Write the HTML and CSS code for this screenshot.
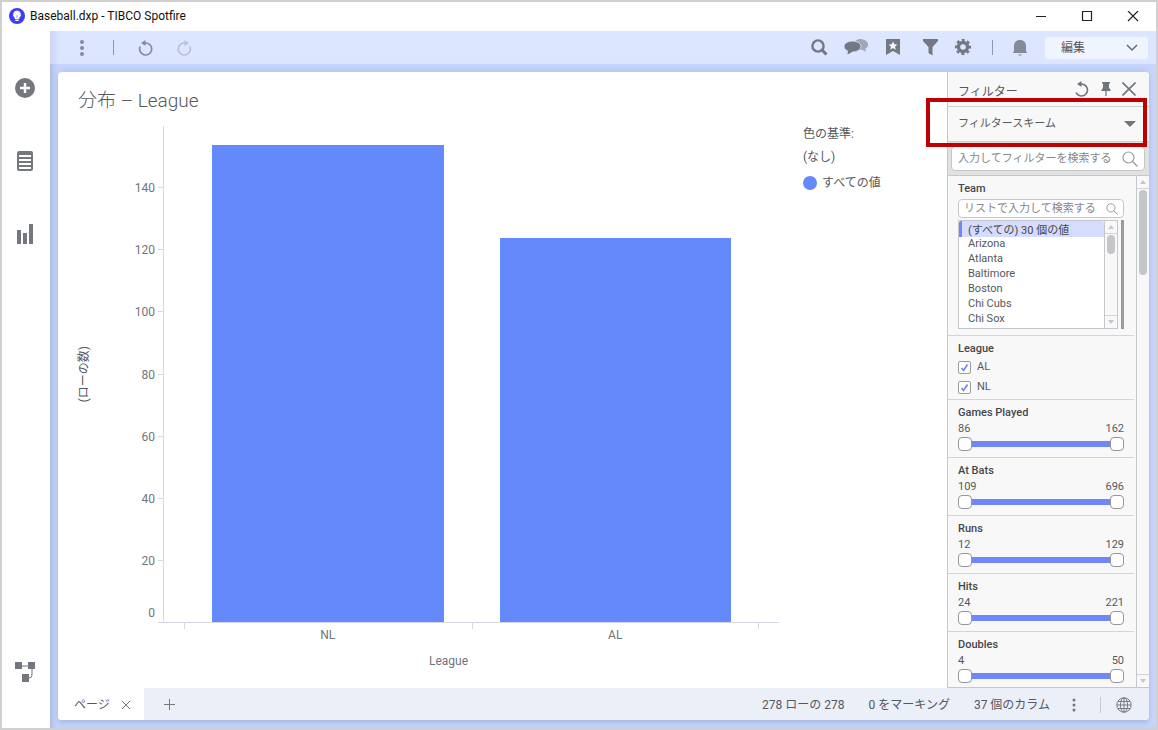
FILE: index.html
```html
<!DOCTYPE html>
<html lang="ja">
<head>
  <meta charset="UTF-8">
  <title>Baseball.dxp - TIBCO Spotfire</title>
  <link rel="stylesheet" href="styles.css">
</head>
<body>
  <header class="titlebar">
    <svg class="logo" width="16" height="16" viewBox="0 0 16 16">
      <circle cx="8" cy="8" r="8" fill="#3d3df5"/>
      <path d="M8 2.500a4 4 0 0 0-2.300 7.200V11h4.600V9.700A4 4 0 0 0 8 2.500z" fill="#fff"/>
      <path d="M6.300 12.300h3.400" stroke="#fff" stroke-width="1.400"/>
      <path d="M8 7v3" stroke="#9a9af9"/>
    </svg>
    <span class="window-title">Baseball.dxp - TIBCO Spotfire</span>
    <button class="win-btn" aria-label="Minimize"><svg width="12" height="12" viewBox="0 0 12 12"><path d="M1 5.500h10" stroke="#222"/></svg></button>
    <button class="win-btn" aria-label="Maximize"><svg width="12" height="12" viewBox="0 0 12 12"><path d="M1.500 .500h9v9h-9z" fill="none" stroke="#222" stroke-width="1.200"/></svg></button>
    <button class="win-btn" aria-label="Close"><svg width="12" height="12" viewBox="0 0 12 12"><path d="M1 0l10 10M11 0L1 10" stroke="#222" stroke-width="1.200"/></svg></button>
  </header>

  <div class="window">
    <nav class="sidebar">
      <button class="side-btn" aria-label="Add">
        <svg width="20" height="20" viewBox="0 0 20 20"><circle cx="10" cy="10" r="10" fill="#74777f"/><path d="M10 5v10M5 10h10" stroke="#fff" stroke-width="2.400"/></svg>
      </button>
      <button class="side-btn" aria-label="Data">
        <svg width="18" height="20" viewBox="0 0 18 20"><rect x="1" y="0" width="16" height="20" rx="2" fill="#74777f"/><path d="M3 5h12M3 9h12M3 13h12M3 17h12" stroke="#fff" stroke-width="1.800"/></svg>
      </button>
      <button class="side-btn" aria-label="Visualizations">
        <svg width="18" height="20" viewBox="0 0 18 20"><path d="M1 6h4v14H1zM7 9h4v11H7zM13 0h4v20h-4z" fill="#74777f"/></svg>
      </button>
      <button class="side-btn side-bottom" aria-label="Data canvas">
        <svg width="22" height="20" viewBox="0 0 22 20"><path d="M1 0h7v7H1zM14 0h7v7h-7zM8 12h7v8H8z" fill="#74777f"/><path d="M8 4h6M18 7v6q0 3-3 3" fill="none" stroke="#74777f"/></svg>
      </button>
    </nav>

    <div class="workspace">
      <div class="toolbar">
        <button class="tool-btn" aria-label="Menu">
          <svg width="6" height="16" viewBox="0 0 6 16" fill="#858b98"><circle cx="3" cy="2" r="2"/><circle cx="3" cy="8" r="2"/><circle cx="3" cy="14" r="2"/></svg>
        </button>
        <span class="separator"></span>
        <button class="tool-btn" aria-label="Undo">
          <svg width="16" height="16" viewBox="0 0 16 16"><path d="M2.200 6.500A6 6 0 1 0 8 3H6" fill="none" stroke="#858b98" stroke-width="1.700"/><path d="M7.500 0v6L3 3z" fill="#858b98"/></svg>
        </button>
        <button class="tool-btn" aria-label="Redo" disabled>
          <svg width="16" height="16" viewBox="0 0 16 16"><path d="M13.800 6.500A6 6 0 1 1 8 3h2" fill="none" stroke="#b8c1d6" stroke-width="1.700"/><path d="M8.500 0v6L13 3z" fill="#b8c1d6"/></svg>
        </button>
        <div class="tools-right">
          <button class="tool-btn" aria-label="Search">
            <svg width="18" height="18" viewBox="0 0 18 18"><circle cx="8" cy="7" r="5.600" fill="none" stroke="#747882" stroke-width="2.400"/><path d="M12 11l4.500 4.500" stroke="#747882" stroke-width="3"/></svg>
          </button>
          <button class="tool-btn" aria-label="Comments">
            <svg width="24" height="18" viewBox="0 0 24 18"><path d="M16 0c4.400 0 8 2.400 8 5.500 0 1.800-1 3.300-2.700 4.300l.7 3.200-3.500-2.200H16l-6-8q3-2.800 6-2.800z" fill="#a0a7b7"/><ellipse cx="8.500" cy="7.500" rx="8.500" ry="5.500" fill="#747882" stroke="#dce6fe" stroke-width=".8"/><path d="M4 11l-.5 4.500L9 12.500z" fill="#747882"/></svg>
          </button>
          <button class="tool-btn" aria-label="Bookmarks">
            <svg width="14" height="18" viewBox="0 0 14 18"><path d="M0 0h14v16l-7-4-7 4z" fill="#747882"/><path d="M7 2.500l1.300 2.800 3 .3L9 7.700l.8 3L7 9.100l-2.800 1.600.8-3-2.300-2.100 3-.3z" fill="#f4f7ff"/></svg>
          </button>
          <button class="tool-btn" aria-label="Filters">
            <svg width="16" height="18" viewBox="0 0 16 18"><path d="M1 0h15v2L10.500 8v8.500l-4-2.500V8L1 2z" fill="#747882"/></svg>
          </button>
          <button class="tool-btn gear" aria-label="Settings">
            <svg width="18" height="18" viewBox="0 0 18 18"><circle cx="9" cy="8" r="4.500" fill="none" stroke="#747882" stroke-width="3.400"/><circle cx="9" cy="8" r="6.800" fill="none" stroke="#747882" stroke-width="2.600" stroke-dasharray="2.900 2.440" stroke-dashoffset="1.450"/></svg>
          </button>
          <span class="separator"></span>
          <button class="tool-btn" aria-label="Notifications">
            <svg width="16" height="18" viewBox="0 0 16 18"><path d="M8 1C4.200 1 2 3.500 2 7v5L1 13.500V14h14v-.5L14 12V7C14 3.500 11.800 1 8 1zM6 15.500h4q-2 2.500-4 0z" fill="#848a98"/></svg>
          </button>
          <select class="mode-select" aria-label="Mode">
            <option>編集</option>
          </select>
        </div>
      </div>

      <div class="document">
        <div class="page">
          <main class="visual">
            <h1>分布 – League</h1>
            <div class="chart">
              <div class="y-title"><span>(ローの数)</span></div>
              <div class="y-axis">
                <div class="y-tick"><span>140</span></div>
                <div class="y-tick"><span>120</span></div>
                <div class="y-tick"><span>100</span></div>
                <div class="y-tick"><span>80</span></div>
                <div class="y-tick"><span>60</span></div>
                <div class="y-tick"><span>40</span></div>
                <div class="y-tick"><span>20</span></div>
                <div class="y-tick"><span>0</span></div>
              </div>
              <div class="plot">
                <div class="category"><div class="bar" style="height: 96.25%"></div></div>
                <div class="category"><div class="bar" style="height: 77.5%"></div></div>
              </div>
              <div class="legend">
                <p>色の基準:</p>
                <p>(なし)</p>
                <p class="legend-item"><i class="dot"></i>すべての値</p>
              </div>
              <div class="x-axis">
                <div class="x-label">NL</div>
                <div class="x-label">AL</div>
              </div>
              <div class="x-title">League</div>
            </div>
          </main>

          <aside class="filters">
            <div class="filters-head">
              <h2>フィルター</h2>
              <button aria-label="Reset"><svg width="16" height="16" viewBox="0 0 16 16"><path d="M2 11.500A6 6 0 1 0 8 3H6" fill="none" stroke="#70747c" stroke-width="1.600"/><path d="M7.500 0v6L3 3z" fill="#70747c"/></svg></button>
              <button aria-label="Pin"><svg width="10" height="16" viewBox="0 0 10 16"><path d="M1 1h8v1.500H8V7l1.500 1.500V10h-9V8.500L2 7V2.500H1z" fill="#70747c"/><path d="M5 10v5" stroke="#8f9299" stroke-width="1.600"/></svg></button>
              <button aria-label="Close"><svg width="14" height="14" viewBox="0 0 14 14"><path d="M.5.500l13 13M13.500.500l-13 13" stroke="#70747c" stroke-width="1.600"/></svg></button>
            </div>
            <div class="scheme">
              <select aria-label="フィルタースキーム">
                <option>フィルタースキーム</option>
              </select>
              <div class="highlight"></div>
            </div>
            <div class="filter-search">
              <label class="search-box">
                <input type="text" placeholder="入力してフィルターを検索する" aria-label="入力してフィルターを検索する">
                <svg width="16" height="16" viewBox="0 0 16 16" fill="none" stroke="#999" stroke-width="1.200"><circle cx="6.500" cy="6.500" r="5.500"/><path d="M10.500 10.500l5 5"/></svg>
              </label>
            </div>
            <div class="filters-body">
              <div class="filter-list">
                <section class="filter">
                  <h3>Team</h3>
                  <label class="search-box small">
                    <input type="text" placeholder="リストで入力して検索する" aria-label="リストで入力して検索する">
                    <svg width="12" height="12" viewBox="0 0 16 16" fill="none" stroke="#999" stroke-width="1.300"><circle cx="6.500" cy="6.500" r="5.500"/><path d="M10.500 10.500l5 5"/></svg>
                  </label>
                  <div class="team-box">
                    <div class="team-list">
                      <select multiple size="7" aria-label="Team">
                        <option selected>(すべての) 30 個の値</option>
                        <option>Arizona</option>
                        <option>Atlanta</option>
                        <option>Baltimore</option>
                        <option>Boston</option>
                        <option>Chi Cubs</option>
                        <option>Chi Sox</option>
                      </select>
                      <div class="scrollbar">
                        <span class="arrow up"></span>
                        <span class="thumb"></span>
                        <span class="arrow down"></span>
                      </div>
                    </div>
                    <div class="resize-bar"></div>
                  </div>
                </section>
                <section class="filter checks">
                  <h3>League</h3>
                  <label class="check"><input type="checkbox" checked>AL</label>
                  <label class="check"><input type="checkbox" checked>NL</label>
                </section>
                <section class="filter">
                  <h3>Games Played</h3>
                  <div class="values"><span>86</span><span>162</span></div>
                  <div class="range">
                    <input type="range" min="86" max="162" value="86" aria-label="Games Played min">
                    <input type="range" min="86" max="162" value="162" aria-label="Games Played max">
                  </div>
                </section>
                <section class="filter">
                  <h3>At Bats</h3>
                  <div class="values"><span>109</span><span>696</span></div>
                  <div class="range">
                    <input type="range" min="109" max="696" value="109" aria-label="At Bats min">
                    <input type="range" min="109" max="696" value="696" aria-label="At Bats max">
                  </div>
                </section>
                <section class="filter">
                  <h3>Runs</h3>
                  <div class="values"><span>12</span><span>129</span></div>
                  <div class="range">
                    <input type="range" min="12" max="129" value="12" aria-label="Runs min">
                    <input type="range" min="12" max="129" value="129" aria-label="Runs max">
                  </div>
                </section>
                <section class="filter">
                  <h3>Hits</h3>
                  <div class="values"><span>24</span><span>221</span></div>
                  <div class="range">
                    <input type="range" min="24" max="221" value="24" aria-label="Hits min">
                    <input type="range" min="24" max="221" value="221" aria-label="Hits max">
                  </div>
                </section>
                <section class="filter">
                  <h3>Doubles</h3>
                  <div class="values"><span>4</span><span>50</span></div>
                  <div class="range">
                    <input type="range" min="4" max="50" value="4" aria-label="Doubles min">
                    <input type="range" min="4" max="50" value="50" aria-label="Doubles max">
                  </div>
                </section>
              </div>
              <div class="scrollbar">
                <span class="arrow up"></span>
                <span class="thumb tall"></span>
                <span class="arrow down"></span>
              </div>
            </div>
          </aside>
        </div>

        <footer class="statusbar">
          <div class="tab">
            <span>ページ</span>
            <button aria-label="Close page"><svg width="10" height="10" viewBox="0 0 10 10"><path d="M1 1l8 8M9 1L1 9" stroke="#777"/></svg></button>
          </div>
          <button class="add-tab" aria-label="New page"><svg width="13" height="13" viewBox="0 0 13 13"><path d="M6.500 1v11M1 6.500h11" stroke="#777"/></svg></button>
          <div class="status">
            <span>278 ローの 278</span>
            <span>0 をマーキング</span>
            <span>37 個のカラム</span>
            <button aria-label="More"><svg width="4" height="14" viewBox="0 0 4 14" fill="#70747c"><circle cx="2" cy="2" r="1.500"/><circle cx="2" cy="7" r="1.500"/><circle cx="2" cy="12" r="1.500"/></svg></button>
            <i class="status-line"></i>
            <button aria-label="Language"><svg width="16" height="16" viewBox="0 0 16 16" fill="none" stroke="#777b82"><circle cx="8" cy="8" r="7.200"/><ellipse cx="8" cy="8" rx="3.600" ry="7.200"/><path d="M8 1v14M1 8h14M2 4.500h12M2 11.500h12"/></svg></button>
          </div>
        </footer>
      </div>
    </div>
  </div>
</body>
</html>
```
FILE: styles.css
```css
* {
  box-sizing: border-box;
}
body {
  margin: 0;
  height: 100vh;
  display: flex;
  flex-direction: column;
  border: 2px solid #d0d0d0;
  background: #fff;
  color: #55585e;
  font-family: Roboto, "Noto Sans CJK JP", sans-serif;
  font-size: 12px;
  line-height: 16px;
}
h1, h2, h3, p {
  margin: 0;
  font-weight: 400;
}
button {
  display: flex;
  align-items: center;
  justify-content: center;
  padding: 0;
  border: 0;
  background: none;
}
select, input {
  margin: 0;
  font: inherit;
  color: inherit;
}

/* title bar */
.titlebar {
  display: flex;
  align-items: center;
  height: 29px;
  padding-left: 7px;
}
.logo {
  margin-bottom: 2px;
}
.window-title {
  flex: 1;
  margin: 0 0 1px 5px;
  color: #111;
}
.win-btn {
  width: 46px;
  height: 29px;
}

.window {
  flex: 1;
  display: flex;
  min-height: 0;
}

/* left side */
.sidebar {
  display: flex;
  flex-direction: column;
  width: 48px;
  padding: 20px 2px 20px 0;
}
.side-btn {
  height: 73px;
}
.side-bottom {
  margin-top: auto;
}

/* toolbar */
.workspace {
  flex: 1;
  display: flex;
  flex-direction: column;
  min-width: 0;
  background: #c7d6fb;
  box-shadow: inset 6px 0 6px -3px #a9b9e2;
}
.toolbar {
  display: flex;
  align-items: center;
  height: 33px;
  padding: 0 8px 0 13px;
  background: linear-gradient(90deg, #c9d6f3, #dce6fe 10px);
}
.tool-btn {
  width: 38px;
  height: 33px;
}
.separator {
  width: 1px;
  height: 15px;
  margin: 0 13px 0 12px;
  background: #8f96a5;
}
.tools-right {
  display: flex;
  align-items: center;
  margin-left: auto;
}
.tools-right .tool-btn {
  width: 37px;
}
.tools-right .gear {
  width: 30px;
}
.tools-right .separator {
  margin: 0 8px 0 14px;
}
.mode-select {
  appearance: none;
  width: 103px;
  height: 22px;
  margin-left: 7px;
  padding: 0 16px;
  border: 0;
  border-radius: 3px;
  background: #f0f4fd url("data:image/svg+xml,%3Csvg xmlns='http://www.w3.org/2000/svg' width='12' height='8'%3E%3Cpath d='M1 1l5 5 5-5' fill='none' stroke='%23666a72' stroke-width='1.500'/%3E%3C/svg%3E") no-repeat right 10px center;
}

/* document */
.document {
  flex: 1;
  display: flex;
  flex-direction: column;
  min-height: 0;
  margin: 8px 7px 8px 8px;
  border-radius: 4px;
  background: #fff;
  box-shadow: 0 3px 5px #a9b9e2, 0 -5px 6px -2px #b9caf0;
  overflow: hidden;
}
.page {
  flex: 1;
  display: flex;
  min-height: 0;
}
.visual {
  flex: 1;
  display: flex;
  flex-direction: column;
  min-width: 0;
}
.visual h1 {
  height: 54px;
  padding: 17px 20px 0;
  font-size: 19px;
  font-weight: 300;
  line-height: 24px;
}

/* bar chart */
.chart {
  flex: 1;
  display: grid;
  grid-template-columns: 60px 46px 1fr 168px;
  grid-template-rows: 1fr 32px 33px;
}
.y-title {
  display: flex;
  align-items: center;
  padding-left: 18px;
}
.y-title span {
  writing-mode: vertical-rl;
  text-orientation: sideways;
  transform: rotate(180deg);
}
.y-axis {
  display: flex;
  flex-direction: column;
  border-right: 1px solid #d5d7e2;
  color: #70747c;
}
.y-tick {
  flex: 1;
  display: flex;
  align-items: flex-end;
  justify-content: flex-end;
}
.y-tick span {
  margin-bottom: -8px;
}
.y-tick:last-child span {
  margin-bottom: 2px;
}
.y-tick::after {
  content: "";
  width: 5px;
  height: 1px;
  margin-left: 3px;
  background: #d5d7e2;
}
.plot {
  display: flex;
  padding: 0 20px;
  border-bottom: 1px solid #d5d7e2;
}
.category {
  flex: 1;
  display: flex;
  align-items: flex-end;
  padding: 0 28px;
}
.bar {
  flex: 1;
  background: #6489fb;
}
.x-axis {
  grid-column: 3;
  grid-row: 2;
  display: flex;
  padding: 0 20px;
  color: #70747c;
  text-align: center;
}
.x-label {
  flex: 1;
  padding-top: 4px;
  background: linear-gradient(#d5d7e2, #d5d7e2) left top / 1px 6px no-repeat;
}
.x-label:last-child {
  background: linear-gradient(#d5d7e2, #d5d7e2) left top / 1px 6px no-repeat, linear-gradient(#d5d7e2, #d5d7e2) right top / 1px 6px no-repeat;
}
.x-title {
  grid-column: 2 / 4;
  grid-row: 3;
  margin-top: -2px;
  color: #70747c;
  text-align: center;
}
.legend {
  padding-left: 24px;
}
.legend p {
  margin-bottom: 7px;
}
.legend-item {
  display: flex;
  align-items: center;
  padding-top: 3px;
}
.dot {
  width: 14px;
  height: 14px;
  margin-right: 5px;
  border-radius: 50%;
  background: #6489fb;
}

/* filter panel */
.filters {
  display: flex;
  flex-direction: column;
  width: 202px;
  border-left: 1px solid #c6c7cc;
  border-bottom: 1px solid #c6c7cc;
  background: #f8f8f8;
}
.filters-head {
  display: flex;
  align-items: center;
  height: 34px;
  padding: 0 13px 0 10px;
}
.filters-head h2 {
  flex: 1;
  padding-top: 6px;
  font-size: 12px;
}
.filters-head button {
  margin-left: 11px;
}
.scheme {
  position: relative;
  height: 36px;
  border: solid #cfd0d4;
  border-width: 1px 0;
}
.scheme select {
  appearance: none;
  width: 100%;
  height: 33px;
  padding: 0 10px;
  border: 0;
  background: url("data:image/svg+xml,%3Csvg xmlns='http://www.w3.org/2000/svg' width='12' height='6'%3E%3Cpath d='M0 0h12L6 6z' fill='%2370747c'/%3E%3C/svg%3E") no-repeat right 13px center;
  font-size: 11px;
}
.highlight {
  position: absolute;
  top: -9px;
  right: 2px;
  bottom: -6px;
  left: -22px;
  border: 4px solid #c00000;
  pointer-events: none;
}
.filter-search {
  padding: 4px 4px 4px 3px;
  border-bottom: 1px solid #c6c7cc;
  background: #e1e1e2;
}
.search-box {
  display: flex;
  align-items: center;
  height: 25px;
  padding: 0 6px;
  border: 1px solid #c6c7cc;
  border-radius: 4px;
  background: #fff;
}
.search-box input {
  flex: 1;
  min-width: 0;
  padding: 0;
  border: 0;
  background: none;
  font-size: 11px;
}
.search-box input::placeholder {
  color: #85878c;
}
.search-box.small {
  height: 19px;
  margin: 2px 0;
  padding: 0 5px;
}
.filters-body {
  flex: 1;
  display: flex;
  min-height: 0;
}
.filter-list {
  flex: 1;
  overflow: hidden;
  font-size: 11px;
}
.filter {
  margin-right: 2px;
  padding: 5px 10px 6px;
  border-bottom: 1px solid #d3d4d8;
}
.filter h3 {
  font-size: 11px;
  font-weight: 500;
  color: #45474c;
}
.filter.checks {
  padding-bottom: 2px;
}
.team-box {
  display: flex;
  justify-content: space-between;
  height: 109px;
}
.team-list {
  display: flex;
  width: 160px;
  border: 1px solid #c6c7cc;
  background: #fff;
}
.team-list select {
  flex: 1;
  min-width: 0;
  padding: 0;
  border: 0;
  outline: 0;
  overflow: hidden;
  background: #fff;
  scrollbar-width: none;
}
.team-list option {
  min-height: 15px;
  padding: 0 0 0 9px;
  line-height: 15px;
}
.team-list option:checked {
  background: linear-gradient(90deg, #7187f6 3px, #d5dcfd 3px);
  color: #45474c;
}
.resize-bar {
  width: 3px;
  background: #9b9ca0;
}
.check {
  display: flex;
  align-items: center;
  height: 20px;
}
.check input {
  appearance: none;
  width: 13px;
  height: 13px;
  margin-right: 6px;
  border: 1px solid #9b9ca4;
  border-radius: 2px;
  background: #fff;
}
.check input:checked {
  background: #fff url("data:image/svg+xml,%3Csvg xmlns='http://www.w3.org/2000/svg' width='9' height='9'%3E%3Cpath d='M1.500 5l2 2.500 4-6' fill='none' stroke='%236c83f5' stroke-width='1.600'/%3E%3C/svg%3E") no-repeat center;
}
.values {
  display: flex;
  justify-content: space-between;
}

/* two sliders stacked on one track */
.range {
  display: grid;
  height: 14px;
  background: linear-gradient(#6f87f8, #6f87f8) center / 100% 6px no-repeat;
}
.range input {
  grid-area: 1 / 1;
  appearance: none;
  width: 100%;
  height: 14px;
  background: none;
  pointer-events: none;
}
.range input::-webkit-slider-thumb {
  appearance: none;
  width: 14px;
  height: 14px;
  border: 1px solid #96979e;
  border-radius: 4px;
  background: #fff;
  pointer-events: auto;
}

.scrollbar {
  display: flex;
  flex-direction: column;
  align-items: center;
  width: 13px;
  border-left: 1px solid #c6c7cc;
  background: #f8f8f8;
}
.arrow {
  align-self: stretch;
  height: 13px;
  border-bottom: 1px solid #d3d4d8;
  background: url("data:image/svg+xml,%3Csvg xmlns='http://www.w3.org/2000/svg' width='6' height='4'%3E%3Cpath d='M0 4h6L3 0z' fill='%23c6c7cc'/%3E%3C/svg%3E") no-repeat center;
}
.arrow.down {
  margin-top: auto;
  transform: rotate(180deg);
}
.thumb {
  width: 8px;
  height: 19px;
  margin-top: 1px;
  border-radius: 4px;
  background: #c5c6ca;
}
.thumb.tall {
  height: 85px;
}

/* bottom bar */
.statusbar {
  display: flex;
  height: 32px;
  background: #ebeff8;
}
.tab {
  display: flex;
  align-items: center;
  gap: 11px;
  width: 86px;
  padding: 1px 0 0 16px;
  background: #fff;
}
.add-tab {
  width: 50px;
}
.status {
  display: flex;
  align-items: center;
  gap: 24px;
  margin-left: auto;
  padding: 1px 17px 0 0;
}
.status button {
  margin-left: -2px;
}
.status button:last-child {
  margin-left: -9px;
}
.status-line {
  width: 1px;
  height: 16px;
  background: #c6c9d2;
}
```
